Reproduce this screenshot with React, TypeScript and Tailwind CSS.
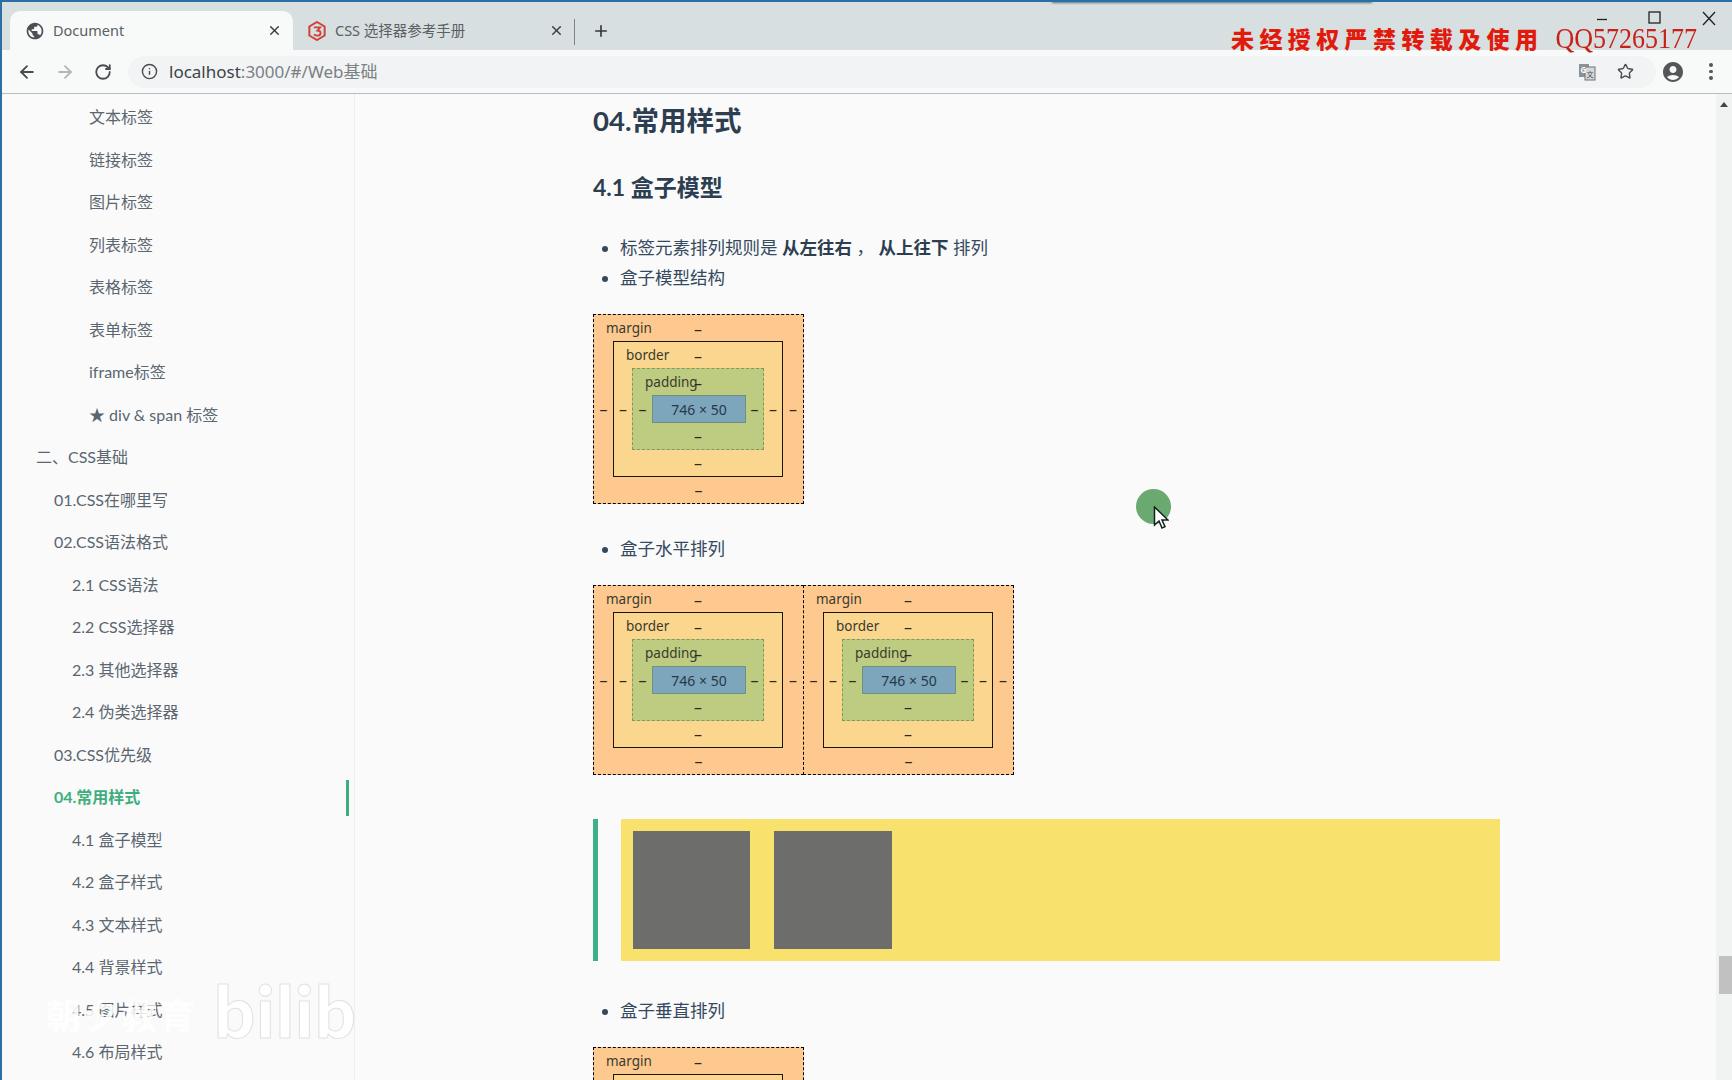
import { ReactNode } from "react";
import { ArrowLeft, ArrowRight, Info, Plus, RotateCw, Star, X } from "lucide-react";
import { MdAccountCircle, MdPublic } from "react-icons/md";

const navItems = [
  { label: "文本标签", level: "pl-[87px]" },
  { label: "链接标签", level: "pl-[87px]" },
  { label: "图片标签", level: "pl-[87px]" },
  { label: "列表标签", level: "pl-[87px]" },
  { label: "表格标签", level: "pl-[87px]" },
  { label: "表单标签", level: "pl-[87px]" },
  { label: "iframe标签", level: "pl-[87px]" },
  { label: "★ div & span 标签", level: "pl-[87px]" },
  { label: "二、CSS基础", level: "pl-[34px]" },
  { label: "01.CSS在哪里写", level: "pl-[52px]" },
  { label: "02.CSS语法格式", level: "pl-[52px]" },
  { label: "2.1 CSS语法", level: "pl-[70px]" },
  { label: "2.2 CSS选择器", level: "pl-[70px]" },
  { label: "2.3 其他选择器", level: "pl-[70px]" },
  { label: "2.4 伪类选择器", level: "pl-[70px]" },
  { label: "03.CSS优先级", level: "pl-[52px]" },
  { label: "04.常用样式", level: "pl-[52px]", active: true },
  { label: "4.1 盒子模型", level: "pl-[70px]" },
  { label: "4.2 盒子样式", level: "pl-[70px]" },
  { label: "4.3 文本样式", level: "pl-[70px]" },
  { label: "4.4 背景样式", level: "pl-[70px]" },
  { label: "4.5 图片样式", level: "pl-[70px]" },
  { label: "4.6 布局样式", level: "pl-[70px]" },
];

function Dash({ className = "" }: { className?: string }) {
  return <span className={`flex items-center justify-center text-[16px] leading-none text-[#2e2a1c] ${className}`}>–</span>;
}

function TopRow({ label, labelWidth }: { label: string; labelWidth: string }) {
  return (
    <div className="flex h-[26px] items-center pt-[2px]">
      <span className={`shrink-0 whitespace-nowrap pl-[12px] ${labelWidth}`}>{label}</span>
      <Dash className="w-[6px]" />
    </div>
  );
}

function BoxModel({ className = "" }: { className?: string }) {
  return (
    <div className={`h-[190px] w-[211px] shrink-0 border border-dashed border-black bg-[#fdc98e] font-['Noto_Sans',sans-serif] text-[13.500px] leading-none text-[#3a3a30] ${className}`}>
      <TopRow label="margin" labelWidth="w-[101px]" />
      <div className="flex h-[136px]">
        <Dash className="w-[19px]" />
        <div className="h-[136px] w-[170px] border border-[#1c1608] bg-[#fbd68e]">
          <TopRow label="border" labelWidth="w-[81px]" />
          <div className="flex h-[82px]">
            <Dash className="w-[18px]" />
            <div className="h-[82px] w-[132px] border border-dashed border-[#7f9a5f] bg-[#bdcc80]">
              <TopRow label="padding" labelWidth="w-[62px]" />
              <div className="flex h-[28px]">
                <Dash className="w-[19px]" />
                <div className="flex h-[28px] w-[94px] items-center justify-center border border-[#6f8f80] bg-[#7da6bc] pt-[1px] text-[14px] text-[#26394a]">
                  746 × 50
                </div>
                <Dash className="w-[17px]" />
              </div>
              <Dash className="h-[26px]" />
            </div>
            <Dash className="w-[18px]" />
          </div>
          <Dash className="h-[26px]" />
        </div>
        <Dash className="w-[20px]" />
      </div>
      <Dash className="h-[26px]" />
    </div>
  );
}

function Bullets({ children, className = "" }: { children: ReactNode; className?: string }) {
  return <ul className={`list-disc pl-[27px] text-[17.500px] leading-[30px] text-[#34495e] ${className}`}>{children}</ul>;
}

function TabCloseIcon() {
  return <X className="h-[15px] w-[15px] text-[#3c4043]" strokeWidth={2.4} />;
}

export default function App() {
  return (
    <div className="relative flex h-screen flex-col overflow-hidden border-l-2 border-t-2 border-[#2c6ea6] bg-[#fafafa] font-['Noto_Sans','Noto_Sans_CJK_SC',sans-serif]">
      {/* tab strip */}
      <div className="relative flex h-[48px] shrink-0 items-end bg-[#d7dfe0]">
        <div className="ml-[8px] flex h-[39px] w-[283px] items-center rounded-t-[10px] bg-[#f8f9f9] pl-[15px] pr-[11px]">
          <MdPublic className="h-[20px] w-[20px] text-[#4a4f54]" />
          <span className="ml-[8px] text-[14.500px] text-[#5a6063]">Document</span>
          <span className="ml-auto"><TabCloseIcon /></span>
        </div>
        <div className="flex h-[39px] w-[272px] items-center pl-[15px] pr-[1px]">
          <svg viewBox="0 0 20 22" className="h-[20px] w-[18px]">
            <path d="M10 1 18.500 6v10L10 21 1.500 16V6z" fill="none" stroke="#d0413a" strokeWidth="2.200" />
            <path d="M6.500 7h7l-3 3.500c2.500 0 3.500 1.300 3.500 2.700 0 1.800-1.600 3-3.700 3-1.500 0-2.800-.6-3.500-1.700" fill="none" stroke="#d0413a" strokeWidth="2" />
          </svg>
          <span className="ml-[9px] text-[14.500px] text-[#5a6063]">CSS 选择器参考手册</span>
          <span className="ml-auto"><TabCloseIcon /></span>
        </div>
        <div className="mb-[5px] ml-[9px] h-[26px] w-px bg-[#7d8386]" />
        <div className="mb-[10px] ml-[17px]">
          <Plus className="h-[18px] w-[18px] text-[#33373a]" strokeWidth={2.2} />
        </div>
        <div className="ml-auto flex self-start pt-[9px]">
          <svg viewBox="0 0 150 16" className="mr-[2px] h-[16px] w-[150px]" fill="none" stroke="#222" strokeWidth="1.300">
            <path d="M17 8.500h10" />
            <rect x="69" y="1" width="11" height="11" />
            <path d="m123 1 12 13M135 1l-12 13" />
          </svg>
        </div>
        <div className="absolute left-[1229px] top-[24px] flex items-center text-[#e11a0c]">
          <span className="text-[23px] font-black leading-none tracking-[5.400px]">未经授权严禁转载及使用</span>
          <span className="ml-[12px] origin-center scale-y-115 font-['Liberation_Serif',serif] text-[26px] leading-none text-[#c9201a]">QQ57265177</span>
        </div>
        <div className="absolute left-[1050px] top-[-2px] h-[3px] w-[320px] bg-[#5d7383] blur-[1px]" />
      </div>

      {/* toolbar */}
      <div className="flex h-[44px] shrink-0 items-center border-b border-[#b9bcbd] bg-[#f8f9f9]">
        <ArrowLeft className="ml-[15px] h-[20px] w-[20px] text-[#4a4d50]" strokeWidth={2.2} />
        <ArrowRight className="ml-[18px] h-[20px] w-[20px] text-[#b4b7b9]" strokeWidth={2.2} />
        <RotateCw className="ml-[19px] h-[18px] w-[18px] text-[#4a4d50]" strokeWidth={2.4} />
        <div className="ml-[16px] flex h-[32px] w-[1528px] items-center rounded-full bg-[#f1f3f4] pl-[13px] pr-[22px]">
          <Info className="h-[17px] w-[17px] text-[#4a4d50]" strokeWidth={2} />
          <span className="ml-[11px] text-[17px] text-[#3f4346]">
            localhost<span className="text-[#7b8084]">:3000/#/Web基础</span>
          </span>
          <svg viewBox="0 0 18 18" className="ml-auto mr-[21px] h-[18px] w-[18px]">
            <rect x="1" y="1" width="10" height="13" fill="#8c9296" />
            <rect x="7" y="4" width="10" height="13" fill="#d5d8da" stroke="#6d7276" />
            <text x="2.500" y="10" fontSize="8" fill="#fff" fontWeight="700">G</text>
            <text x="8.500" y="13.500" fontSize="7" fill="#4a4d50">文</text>
          </svg>
          <Star className="h-[17px] w-[17px] text-[#4a4d50]" strokeWidth={2} />
        </div>
        <MdAccountCircle className="ml-[5px] h-[24px] w-[24px] text-[#53575a]" />
        <div className="ml-[24px] flex flex-col gap-[3px]">
          <span className="h-[3.500px] w-[3.500px] rounded-full bg-[#53575a]" />
          <span className="h-[3.500px] w-[3.500px] rounded-full bg-[#53575a]" />
          <span className="h-[3.500px] w-[3.500px] rounded-full bg-[#53575a]" />
        </div>
      </div>

      <div className="flex min-h-0 flex-1">
        {/* sidebar */}
        <aside className="relative w-[353px] shrink-0 overflow-hidden border-r border-[#eeeeee] pt-[2px] font-['Lato','Noto_Sans_CJK_SC',sans-serif]">
          {navItems.map((item) => (
            <div
              key={item.label}
              className={`relative flex h-[42.500px] items-center text-[16px] ${item.level} ${
                item.active ? "font-bold text-[#3eaf7c]" : "text-[#5a6670]"
              }`}
            >
              {item.label}
              {item.active && <span className="absolute right-[5px] top-[4px] h-[36px] w-[3px] bg-[#3eaf7c]" />}
            </div>
          ))}
          <div className="absolute left-[44px] top-[904px] text-[35px] font-bold leading-none tracking-[3px] text-white/85">朝夕教育</div>
          <div className="absolute left-[212px] top-[880px] whitespace-nowrap text-[72px] font-black leading-none tracking-[1px] text-white/90 [-webkit-text-stroke:1px_#e0e2e2]">
            bilibili
          </div>
        </aside>

        {/* content */}
        <main className="min-w-0 flex-1 pl-[238px] font-['Lato','Noto_Sans_CJK_SC',sans-serif]">
          <h2 className="flex h-[54px] items-center text-[27.500px] font-bold text-[#2c3e50]">04.常用样式</h2>
          <h3 className="mt-[19px] flex h-[40px] items-center text-[23px] font-bold text-[#2c3e50]">4.1 盒子模型</h3>
          <Bullets className="mt-[26px]">
            <li>
              标签元素排列规则是 <strong className="font-bold text-[#2c3e50]">从左往右</strong> ， <strong className="font-bold text-[#2c3e50]">从上往下</strong> 排列
            </li>
            <li>盒子模型结构</li>
          </Bullets>
          <div className="mt-[21px]">
            <BoxModel />
          </div>
          <Bullets className="mt-[30px]">
            <li>盒子水平排列</li>
          </Bullets>
          <div className="mt-[21px] flex">
            <BoxModel />
            <BoxModel className="-ml-px" />
          </div>
          <div className="mt-[44px] flex h-[142px] w-[907px]">
            <div className="w-[5px] bg-[#3eaf86]" />
            <div className="ml-[23px] flex flex-1 gap-[24px] bg-[#f8e16c] p-[12px]">
              <div className="h-[118px] w-[117px] bg-[#6d6d6b]" />
              <div className="h-[118px] w-[118px] bg-[#6d6d6b]" />
            </div>
          </div>
          <Bullets className="mt-[35px]">
            <li>盒子垂直排列</li>
          </Bullets>
          <div className="mt-[21px]">
            <BoxModel />
          </div>
        </main>

        {/* scrollbar */}
        <div className="relative w-[16px] shrink-0 bg-[#f1f2f2]">
          <div className="mx-auto mt-[8px] h-0 w-0 border-x-[4px] border-b-[5px] border-x-transparent border-b-[#444]" />
          <div className="absolute bottom-[86px] right-0 h-[38px] w-[13px] bg-[#c1c1c1]" />
        </div>
      </div>

      {/* recorded mouse pointer */}
      <div className="absolute left-[1134px] top-[487px] h-[35px] w-[35px] rounded-full bg-[#6aa96f]" />
      <svg viewBox="0 0 16 24" className="absolute left-[1151px] top-[504px] h-[24px] w-[16px]">
        <path d="M1.500 1v18l4.500-4 3 7 3-1.300-3-6.700h6z" fill="#fff" stroke="#16211c" strokeWidth="1.500" />
      </svg>
    </div>
  );
}
